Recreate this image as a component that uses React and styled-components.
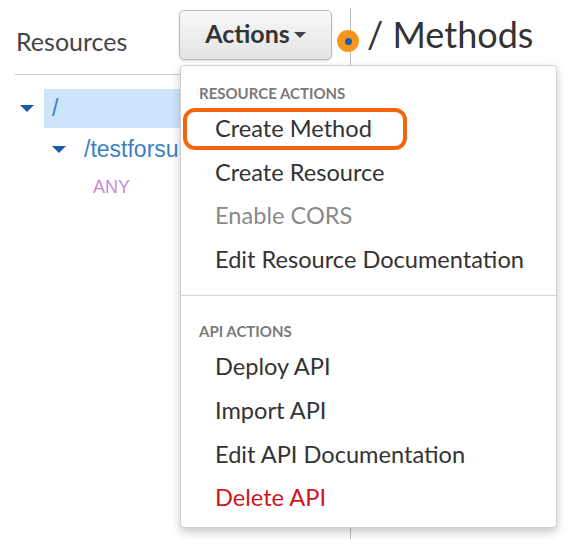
import React from "react";
import styled, { createGlobalStyle } from "styled-components";

const GlobalStyle = createGlobalStyle`
  html, body {
    margin: 0;
    padding: 0;
    background: #ffffff;
    font-family: "Lato", "Open Sans", "Liberation Sans", sans-serif;
  }
`;

const Page = styled.div`
  position: relative;
  width: 568px;
  height: 539px;
  overflow: hidden;
  display: grid;
  grid-template-columns: 351px 1fr;
  padding-top: 8px;
  box-sizing: border-box;
`;

const Sidebar = styled.div`
  border-right: 1px solid #bdbdbd;
  padding-left: 15px;
`;

const Header = styled.div`
  display: flex;
  justify-content: space-between;
  align-items: flex-start;
  height: 67px;
  box-sizing: border-box;
  padding: 2px 8px 0 1px;
  border-bottom: 1px solid #c8c8c8;
  margin-right: 10px;
`;

const Title = styled.div`
  margin-top: 16px;
  font-size: 25px;
  line-height: 1.2;
  color: #444444;
`;

const ActionsWrap = styled.div`
  position: relative;
`;

const ActionsButton = styled.button`
  width: 153px;
  height: 50px;
  border: 1px solid #b9b9b9;
  border-radius: 5px;
  background: linear-gradient(#f8f8f8, #e4e4e4);
  box-shadow: 0 1px 2px rgba(0, 0, 0, 0.15);
  font-family: inherit;
  font-size: 25px;
  font-weight: 700;
  color: #333333;
  display: flex;
  align-items: center;
  justify-content: center;
  gap: 4px;
  padding: 0 0 4px;
`;

const Caret = styled.span`
  width: 0;
  height: 0;
  border-left: 6px solid transparent;
  border-right: 6px solid transparent;
  border-top: 6px solid #444444;
  margin-top: 3px;
`;

const Menu = styled.div`
  position: absolute;
  top: 55px;
  left: 1px;
  width: 377px;
  height: 463px;
  box-sizing: border-box;
  background: #ffffff;
  border: 1px solid #cfcfcf;
  border-radius: 4px;
  box-shadow: 0 4px 10px rgba(0, 0, 0, 0.22);
  padding-top: 14px;
  z-index: 5;
`;

const SectionLabel = styled.div`
  padding-left: 18px;
  height: 27px;
  line-height: 27px;
  font-size: 15px;
  font-weight: 700;
  color: #7a7a7a;
  text-transform: uppercase;
  margin-top: ${(p) => p.$top || 0}px;
`;

const Item = styled.div`
  position: relative;
  padding-left: 34px;
  height: 43.6px;
  line-height: 43.6px;
  font-size: 23.6px;
  color: ${(p) =>
    p.$variant === "disabled" ? "#8a8a8a" : p.$variant === "danger" ? "#d0141e" : "#333333"};
  white-space: nowrap;
`;

const Callout = styled.span`
  position: absolute;
  left: 2px;
  top: 1px;
  width: 224px;
  height: 42px;
  box-sizing: border-box;
  border: 4px solid #f5650f;
  border-radius: 12px;
`;

const Divider = styled.div`
  height: 1px;
  background: #d6d6d6;
  margin-top: 14px;
`;

const Tree = styled.div`
  padding-top: 14px;
  font-family: "Liberation Sans", Arial, sans-serif;
`;

const Row = styled.div`
  display: flex;
  align-items: center;
  height: ${(p) => p.$h || 42}px;
  padding-left: ${(p) => p.$indent}px;
`;

const Toggle = styled.span`
  width: 0;
  height: 0;
  border-left: 7px solid transparent;
  border-right: 7px solid transparent;
  border-top: 7px solid #1c5aa6;
  margin-right: 10px;
`;

const Node = styled.div`
  flex: 1;
  align-self: stretch;
  display: flex;
  align-items: center;
  padding-left: 8px;
  font-size: 23px;
  color: #3a7fc6;
  background: ${(p) => (p.$selected ? "#cde5fb" : "transparent")};
  white-space: nowrap;
`;

const Method = styled.span`
  padding-left: ${(p) => p.$indent}px;
  font-size: 18px;
  color: #c58bd8;
`;

const Content = styled.div`
  padding-left: 16px;
`;

const PageTitle = styled.h1`
  margin: 0;
  margin-top: 5px;
  font-size: 36px;
  font-weight: 400;
  line-height: 1.2;
  color: #333333;
`;

const Marker = styled.span`
  position: absolute;
  left: 337px;
  top: 30px;
  width: 22px;
  height: 22px;
  border-radius: 50%;
  background: #f7961f;
  display: flex;
  align-items: center;
  justify-content: center;
  z-index: 6;

  &::after {
    content: "";
    width: 7px;
    height: 7px;
    border-radius: 50%;
    background: #1d5db8;
  }
`;

const resourceActions = [
  { label: "Create Method", callout: true },
  { label: "Create Resource" },
  { label: "Enable CORS", variant: "disabled" },
  { label: "Edit Resource Documentation" },
];

const apiActions = [
  { label: "Deploy API" },
  { label: "Import API" },
  { label: "Edit API Documentation" },
  { label: "Delete API", variant: "danger" },
];

export default function App() {
  return (
    <>
      <GlobalStyle />
      <Page>
        <Sidebar>
          <Header>
            <Title>Resources</Title>
            <ActionsWrap>
              <ActionsButton>
                Actions
                <Caret />
              </ActionsButton>
              <Menu>
                <SectionLabel>Resource Actions</SectionLabel>
                {resourceActions.map((a) => (
                  <Item key={a.label} $variant={a.variant}>
                    {a.callout && <Callout />}
                    {a.label}
                  </Item>
                ))}
                <Divider />
                <SectionLabel $top={22}>API Actions</SectionLabel>
                {apiActions.map((a) => (
                  <Item key={a.label} $variant={a.variant}>
                    {a.label}
                  </Item>
                ))}
              </Menu>
            </ActionsWrap>
          </Header>
          <Tree>
            <Row $indent={5} $h={39}>
              <Toggle />
              <Node $selected>/</Node>
            </Row>
            <Row $indent={37} $h={42}>
              <Toggle />
              <Node>/testforsubresource</Node>
            </Row>
            <Row $indent={0} $h={34}>
              <Method $indent={78}>ANY</Method>
            </Row>
          </Tree>
        </Sidebar>
        <Content>
          <PageTitle>/ Methods</PageTitle>
        </Content>
        <Marker />
      </Page>
    </>
  );
}
